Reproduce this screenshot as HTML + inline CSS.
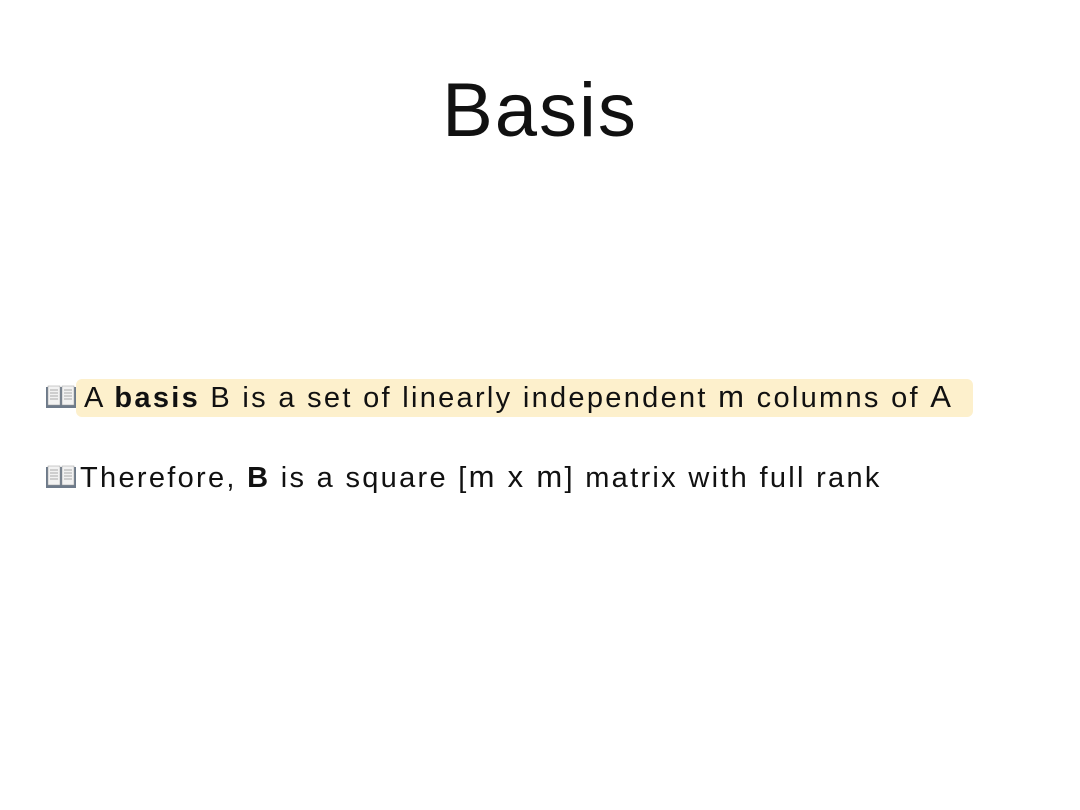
<!DOCTYPE html>
<html><head><style>
body{margin:0;width:1080px;height:810px;background:#fff;font-family:"Liberation Sans","DejaVu Sans",sans-serif;color:#111;position:relative;overflow:hidden}
h1{position:absolute;top:66px;left:0;width:1080px;text-align:center;margin:0;font-weight:normal;font-size:76px;line-height:90px;letter-spacing:2px}
.line{position:absolute;left:46px;font-size:29px;line-height:38px;white-space:nowrap;letter-spacing:2.3px}
.hl{background:#fdf0cc;border-radius:6px;padding:3px 20px 3px 8px;margin-left:-4px}
svg{vertical-align:-2px;margin-right:4px}
.big{font-size:31px}
</style></head><body>
<h1>Basis</h1>
<div class="line" style="top:378px"><svg width="30" height="24" viewBox="0 0 30 24"><rect x="0" y="2" width="30" height="21" fill="#6d7a8a"/><rect x="2" y="1" width="12" height="19" fill="#f2f2f2" stroke="#999" stroke-width=".5"/><rect x="16" y="1" width="12" height="19" fill="#f2f2f2" stroke="#999" stroke-width=".5"/><g stroke="#aaa" stroke-width="1"><path d="M4 5h8M4 8h8M4 11h8M4 14h8M18 5h8M18 8h8M18 11h8M18 14h8"/></g></svg><span class="hl">A <b>basis</b> B is a set of linearly independent <span class="big">m</span> columns of <span class="big">A</span></span></div>
<div class="line" style="top:458px"><svg width="30" height="24" viewBox="0 0 30 24"><rect x="0" y="2" width="30" height="21" fill="#6d7a8a"/><rect x="2" y="1" width="12" height="19" fill="#f2f2f2" stroke="#999" stroke-width=".5"/><rect x="16" y="1" width="12" height="19" fill="#f2f2f2" stroke="#999" stroke-width=".5"/><g stroke="#aaa" stroke-width="1"><path d="M4 5h8M4 8h8M4 11h8M4 14h8M18 5h8M18 8h8M18 11h8M18 14h8"/></g></svg>Therefore, <b>B</b> is a square [<span class="big">m x m</span>] matrix with full rank</div>
</body></html>
